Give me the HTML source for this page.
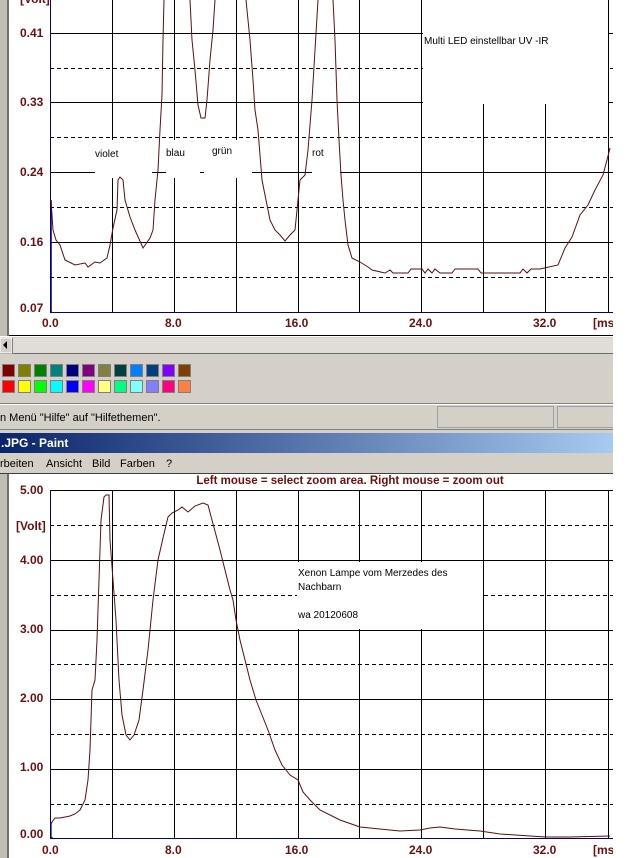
<!DOCTYPE html>
<html><head><meta charset="utf-8"><style>
html,body{margin:0;padding:0;background:#fff;width:640px;height:858px;overflow:hidden}
svg{display:block}
text{font-family:"Liberation Sans",Arial,sans-serif}
.ax{font-weight:bold;font-size:12px;fill:#6b0f0f}
.lb{font-size:10px;fill:#000}
.mn{font-size:11px;fill:#000}
</style></head><body>
<svg width="640" height="858" viewBox="0 0 640 858" xmlns="http://www.w3.org/2000/svg">
<defs>
<linearGradient id="tg" x1="0" x2="1" y1="0" y2="0"><stop offset="0" stop-color="#0a246a"/><stop offset="1" stop-color="#a6caf0"/></linearGradient>
</defs>
<rect width="640" height="858" fill="#fff"/>
<g stroke="#000" stroke-width="1" shape-rendering="crispEdges">
<line x1="50" y1="33.5" x2="613" y2="33.5"/><line x1="50" y1="102.5" x2="613" y2="102.5"/>
<line x1="50" y1="172.5" x2="613" y2="172.5"/><line x1="50" y1="242.5" x2="613" y2="242.5"/>
<g stroke-dasharray="4,3"><line x1="50" y1="68.5" x2="613" y2="68.5"/><line x1="50" y1="137.5" x2="613" y2="137.5"/><line x1="50" y1="207.5" x2="613" y2="207.5"/><line x1="50" y1="277.5" x2="613" y2="277.5"/></g>
<line x1="112.5" y1="0" x2="112.5" y2="312"/><line x1="174.5" y1="0" x2="174.5" y2="312"/><line x1="236.5" y1="0" x2="236.5" y2="312"/><line x1="298.5" y1="0" x2="298.5" y2="312"/><line x1="359.5" y1="0" x2="359.5" y2="312"/><line x1="421.5" y1="0" x2="421.5" y2="312"/><line x1="483.5" y1="0" x2="483.5" y2="312"/><line x1="545.5" y1="0" x2="545.5" y2="312"/><line x1="608.5" y1="0" x2="608.5" y2="312"/>
</g>
<rect x="423" y="0" width="185" height="104" fill="#fff"/>
<rect x="95" y="140" width="57" height="38" fill="#fff"/>
<rect x="166" y="140" width="34" height="38" fill="#fff"/>
<rect x="204" y="140" width="48" height="38" fill="#fff"/>
<rect x="312" y="140" width="28" height="38" fill="#fff"/>
<text class="lb" x="424" y="44">Multi LED einstellbar UV -IR</text>
<text class="lb" x="95" y="157">violet</text>
<text class="lb" x="166" y="156">blau</text>
<text class="lb" x="212" y="154">grün</text>
<text class="lb" x="312" y="156">rot</text>
<line x1="50.5" y1="0" x2="50.5" y2="312" stroke="#000080"/>
<line x1="50" y1="312.5" x2="613" y2="312.5" stroke="#000080"/>
<polyline fill="none" stroke="#000080" stroke-width="1.5" points="51,200 51,312 52,312"/>
<polyline fill="none" stroke="#5a0f0f" stroke-width="1" points="51,200 53,230 56,240 60,245 65,260 75,265 85,263 88,267 95,262 100,263 107,258 110,245 113,228 117,210 118,180 120,177 123,180 125,200 130,217 135,230 143,248 150,238 153,230 155,200 158,170 160,130 162,95 163,40 164,0"/>
<polyline fill="none" stroke="#5a0f0f" stroke-width="1" points="190,0 192,40 195,70 198,105 201,118 205,118 207,100 210,60 213,30 215,0"/>
<polyline fill="none" stroke="#5a0f0f" stroke-width="1" points="246,0 250,40 253,80 255,110 258,130 262,180 266,200 270,220 275,230 280,235 285,241 290,235 295,230 298,200 300,180 305,175 308,150 312,100 315,50 318,0"/>
<polyline fill="none" stroke="#5a0f0f" stroke-width="1" points="333,0 335,40 337,100 339,140 341,175 343,200 345,220 348,245 352,258 360,262 368,267 372,270 385,273 390,270 393,273 400,273 408,273 411,269 422,269 425,273 428,269 432,273 435,269 440,273 452,273 455,269 478,269 481,273 520,273 523,269 527,273 531,269 536,269 540,269 558,265 565,248 572,237 580,215 588,205 595,190 603,175 607,160 610,148"/>
<text class="ax" x="20" y="3">[Volt]</text>
<text class="ax" x="20" y="37">0.41</text>
<text class="ax" x="20" y="106">0.33</text>
<text class="ax" x="20" y="176">0.24</text>
<text class="ax" x="20" y="246">0.16</text>
<text class="ax" x="20" y="312">0.07</text>
<text class="ax" x="42" y="327">0.0</text>
<text class="ax" x="165" y="327">8.0</text>
<text class="ax" x="285" y="327">16.0</text>
<text class="ax" x="409" y="327">24.0</text>
<text class="ax" x="533" y="327">32.0</text>
<text class="ax" x="593" y="327">[ms</text>
<rect x="0" y="0" width="8" height="336" fill="#c0bdb5"/><rect x="7" y="0" width="2" height="336" fill="#707070"/>
<rect x="0" y="474" width="8" height="384" fill="#c0bdb5"/><rect x="7" y="474" width="2" height="384" fill="#707070"/>
<line x1="9" y1="335.5" x2="613" y2="335.5" stroke="#000"/>
<rect x="0" y="337" width="613" height="137" fill="#d4d0c8"/>
<rect x="0" y="338" width="613" height="15" fill="#e0ddd6"/>
<line x1="0" y1="353.5" x2="613" y2="353.5" stroke="#6b6b6b"/>
<rect x="0" y="338" width="12" height="15" fill="#d4d0c8" stroke="#fff" stroke-width="1"/>
<line x1="12.5" y1="338" x2="12.5" y2="353" stroke="#808080"/>
<polygon points="3,345 7,341 7,349" fill="#000"/>
<g stroke="#808080" stroke-width="1">
<rect x="2.5" y="364.5" width="12" height="12" fill="#800000"/><rect x="18.5" y="364.5" width="12" height="12" fill="#808000"/><rect x="34.5" y="364.5" width="12" height="12" fill="#008000"/><rect x="50.5" y="364.5" width="12" height="12" fill="#008080"/><rect x="66.5" y="364.5" width="12" height="12" fill="#000080"/><rect x="82.5" y="364.5" width="12" height="12" fill="#800080"/><rect x="98.5" y="364.5" width="12" height="12" fill="#808040"/><rect x="114.5" y="364.5" width="12" height="12" fill="#004040"/><rect x="130.5" y="364.5" width="12" height="12" fill="#0080ff"/><rect x="146.5" y="364.5" width="12" height="12" fill="#004080"/><rect x="162.5" y="364.5" width="12" height="12" fill="#8000ff"/><rect x="178.5" y="364.5" width="12" height="12" fill="#804000"/>
<rect x="2.5" y="380.5" width="12" height="12" fill="#ff0000"/><rect x="18.5" y="380.5" width="12" height="12" fill="#ffff00"/><rect x="34.5" y="380.5" width="12" height="12" fill="#00ff00"/><rect x="50.5" y="380.5" width="12" height="12" fill="#00ffff"/><rect x="66.5" y="380.5" width="12" height="12" fill="#0000ff"/><rect x="82.5" y="380.5" width="12" height="12" fill="#ff00ff"/><rect x="98.5" y="380.5" width="12" height="12" fill="#ffff80"/><rect x="114.5" y="380.5" width="12" height="12" fill="#00ff80"/><rect x="130.5" y="380.5" width="12" height="12" fill="#80ffff"/><rect x="146.5" y="380.5" width="12" height="12" fill="#8080ff"/><rect x="162.5" y="380.5" width="12" height="12" fill="#ff0080"/><rect x="178.5" y="380.5" width="12" height="12" fill="#ff8040"/>
</g>
<line x1="0" y1="403.5" x2="613" y2="403.5" stroke="#808080"/>
<line x1="0" y1="404.5" x2="613" y2="404.5" stroke="#fff"/>
<rect x="437.5" y="406.5" width="116" height="21" fill="none" stroke="#a0a0a0"/>
<rect x="557.5" y="406.5" width="60" height="21" fill="none" stroke="#a0a0a0"/>
<text class="mn" x="0" y="421">n Menü "Hilfe" auf "Hilfethemen".</text>
<line x1="0" y1="429.5" x2="613" y2="429.5" stroke="#808080"/>
<rect x="0" y="433" width="613" height="20" fill="url(#tg)"/>
<text x="1" y="447" style="font-weight:bold;font-size:12px;fill:#fff">.JPG - Paint</text>
<text class="mn" x="0" y="467">rbeiten</text>
<text class="mn" x="46" y="467">Ansicht</text>
<text class="mn" x="92" y="467">Bild</text>
<text class="mn" x="120" y="467">Farben</text>
<text class="mn" x="166" y="467">?</text>
<line x1="0" y1="473.5" x2="613" y2="473.5" stroke="#404040"/>
<text x="350" y="484" text-anchor="middle" style="font-weight:bold;font-size:11.5px;fill:#6b0f0f">Left mouse = select zoom area. Right mouse = zoom out</text>
<g stroke="#000" stroke-width="1" shape-rendering="crispEdges">
<line x1="50" y1="490.5" x2="613" y2="490.5"/>
<line x1="50" y1="560.5" x2="613" y2="560.5"/><line x1="50" y1="630.5" x2="613" y2="630.5"/><line x1="50" y1="699.5" x2="613" y2="699.5"/><line x1="50" y1="769.5" x2="613" y2="769.5"/>
<g stroke-dasharray="4,3"><line x1="50" y1="525.5" x2="613" y2="525.5"/><line x1="50" y1="595.5" x2="613" y2="595.5"/><line x1="50" y1="664.5" x2="613" y2="664.5"/><line x1="50" y1="734.5" x2="613" y2="734.5"/><line x1="50" y1="804.5" x2="613" y2="804.5"/></g>
<line x1="112.5" y1="490" x2="112.5" y2="838"/><line x1="174.5" y1="490" x2="174.5" y2="838"/><line x1="236.5" y1="490" x2="236.5" y2="838"/><line x1="298.5" y1="490" x2="298.5" y2="838"/><line x1="359.5" y1="490" x2="359.5" y2="838"/><line x1="421.5" y1="490" x2="421.5" y2="838"/><line x1="483.5" y1="490" x2="483.5" y2="838"/><line x1="545.5" y1="490" x2="545.5" y2="838"/><line x1="608.5" y1="490" x2="608.5" y2="838"/>
</g>
<rect x="297" y="562" width="186" height="67" fill="#fff"/>
<text class="lb" x="298" y="576">Xenon Lampe vom Merzedes des</text>
<text class="lb" x="298" y="590">Nachbarn</text>
<text class="lb" x="298" y="618">wa 20120608</text>
<line x1="50.5" y1="490" x2="50.5" y2="838" stroke="#000080"/>
<line x1="50" y1="838.5" x2="613" y2="838.5" stroke="#000080"/>
<polyline fill="none" stroke="#000080" stroke-width="1.2" points="51,822 51,838 53,838"/>
<polyline fill="none" stroke="#5a0f0f" stroke-width="1" points="51,824 52,822 55,818 60,818 70,816 75,814 80,810 85,800 88,780 90,750 92,690 95,680 97,640 99,580 101,520 104,497 106,495 109,495 110,540 113,580 116,620 119,680 122,715 126,735 130,740 134,735 139,720 143,690 148,650 153,600 158,560 163,538 168,517 172,513 178,510 182,507 188,512 195,506 203,503 208,505 212,520 216,535 220,550 225,570 230,590 233,600 236,620 240,640 245,660 250,680 256,700 262,715 268,730 275,750 282,765 290,775 298,780 303,792 310,800 320,810 340,820 360,827 380,829 400,831 420,830 430,828 440,827 455,829 480,831 500,834 530,836 546,837 570,837 610,836"/>
<text class="ax" x="20" y="494">5.00</text>
<text class="ax" x="16" y="530">[Volt]</text>
<text class="ax" x="20" y="564">4.00</text>
<text class="ax" x="20" y="633">3.00</text>
<text class="ax" x="20" y="702">2.00</text>
<text class="ax" x="20" y="771">1.00</text>
<text class="ax" x="20" y="838">0.00</text>
<text class="ax" x="42" y="854">0.0</text>
<text class="ax" x="165" y="854">8.0</text>
<text class="ax" x="285" y="854">16.0</text>
<text class="ax" x="409" y="854">24.0</text>
<text class="ax" x="533" y="854">32.0</text>
<text class="ax" x="593" y="854">[ms</text>
<rect x="613" y="0" width="27" height="858" fill="#fff"/>
</svg>
</body></html>
